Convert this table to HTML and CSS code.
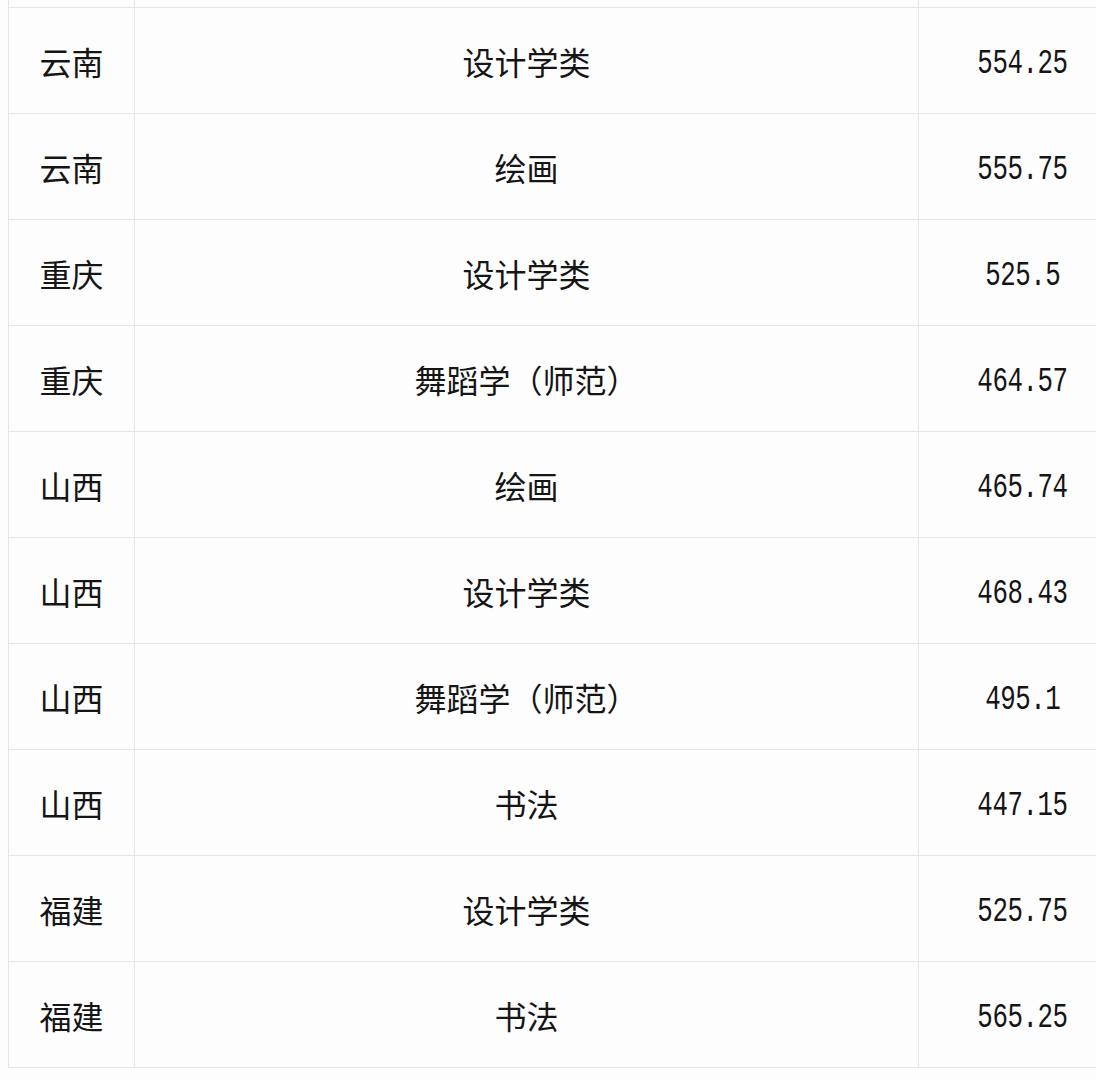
FILE: index.html
```html
<!DOCTYPE html>
<html lang="zh-CN">
<head>
<meta charset="utf-8">
<title>分数表</title>
<link rel="stylesheet" href="styles.css">
</head>
<body>
<div class="wrap">
<table class="scores">
<tbody>
<tr class="partial"><td class="prov"></td><td class="major"></td><td class="num"></td></tr>
<tr><td class="prov">云南</td><td class="major">设计学类</td><td class="num"><span>554.25</span></td></tr>
<tr><td class="prov">云南</td><td class="major">绘画</td><td class="num"><span>555.75</span></td></tr>
<tr><td class="prov">重庆</td><td class="major">设计学类</td><td class="num"><span>525.5</span></td></tr>
<tr><td class="prov">重庆</td><td class="major">舞蹈学（师范）</td><td class="num"><span>464.57</span></td></tr>
<tr><td class="prov">山西</td><td class="major">绘画</td><td class="num"><span>465.74</span></td></tr>
<tr><td class="prov">山西</td><td class="major">设计学类</td><td class="num"><span>468.43</span></td></tr>
<tr><td class="prov">山西</td><td class="major">舞蹈学（师范）</td><td class="num"><span>495.1</span></td></tr>
<tr><td class="prov">山西</td><td class="major">书法</td><td class="num"><span>447.15</span></td></tr>
<tr><td class="prov">福建</td><td class="major">设计学类</td><td class="num"><span>525.75</span></td></tr>
<tr><td class="prov">福建</td><td class="major">书法</td><td class="num"><span>565.25</span></td></tr>
</tbody>
</table>
</div>
</body>
</html>
```
FILE: styles.css
```css
html, body {
  margin: 0;
  padding: 0;
  overflow: hidden;
  background: #fdfdfd;
}
.wrap {
  padding-left: 8px;
  width: 1200px;
}
.scores {
  border-collapse: collapse;
  table-layout: fixed;
  width: 1119px;
  font-family: "Noto Sans CJK SC", "Noto Sans", sans-serif;
  font-size: 32px;
  color: #151515;
}
.scores td {
  height: 105px;
  padding: 0;
  border: 1px solid #e6e6ea;
  background: #fdfdfe;
  text-align: center;
  vertical-align: middle;
  line-height: 1;
}
.scores tr.partial td {
  height: 7px;
  border-top: 0;
}
.prov { width: 125px; }
.major { width: 783px; }
.num { width: 208px; }
.num span {
  display: inline-block;
  font-family: "Liberation Mono", monospace;
  font-size: 30px;
  transform: scale(0.86, 1.15);
  letter-spacing: -0.5px;
}
```
